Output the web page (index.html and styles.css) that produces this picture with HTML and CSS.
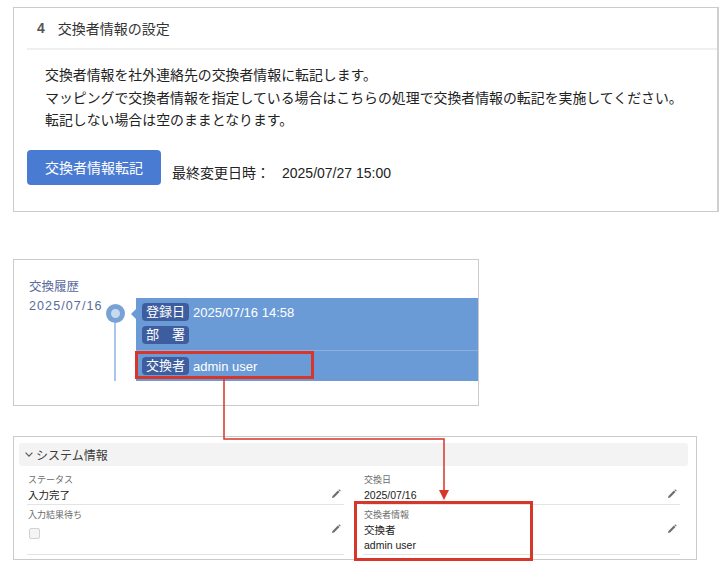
FILE: index.html
```html
<!DOCTYPE html>
<html lang="ja">
<head>
  <meta charset="UTF-8" />
  <meta name="viewport" content="width=device-width, initial-scale=1.0" />
  <title>交換者情報の設定</title>
  <link rel="stylesheet" href="styles.css">
</head>
<body>
  <div class="page">
    <section class="setting">
      <div class="setting-head"><span class="step">4</span>交換者情報の設定</div>
      <p class="setting-text">
        交換者情報を社外連絡先の交換者情報に転記します。<br>
        マッピングで交換者情報を指定している場合はこちらの処理で交換者情報の転記を実施してください。<br>
        転記しない場合は空のままとなります。
      </p>
      <div class="setting-actions">
        <button class="btn">交換者情報転記</button>
        <span class="meta">最終変更日時：<span class="meta-date">2025/07/27 15:00</span></span>
      </div>
    </section>

    <section class="history">
      <div class="history-date">
        <div>交換履歴</div>
        <div class="date-num">2025/07/16</div>
      </div>
      <div class="entry">
        <div class="axis">
          <div class="dot"></div>
          <div class="axis-line"></div>
        </div>
        <div class="card">
          <div class="card-section">
            <div class="row"><span class="badge">登録日</span>2025/07/16 14:58</div>
            <div class="row"><span class="badge">部　署</span></div>
          </div>
          <div class="card-section">
            <div class="row"><span class="badge">交換者</span>admin user</div>
            <div class="mark mark-user"></div>
          </div>
        </div>
      </div>
    </section>

    <section class="sysinfo">
      <div class="sys-head">
        <svg class="chevron" width="8" height="5" viewBox="0 0 8 5"><polyline points="0.6,0.6 4,4.2 7.4,0.6" fill="none" stroke="#555" stroke-width="1.1"/></svg>
        システム情報
      </div>
      <div class="fields">
        <div class="field">
          <div class="field-body">
            <div class="field-label">ステータス</div>
            <div class="field-value">入力完了</div>
          </div>
          <svg class="pencil" width="10" height="10" viewBox="0 0 10 10"><path d="M1 9 L1.5 6.9 L6.9 1.5 L8.5 3.1 L3.1 8.5 Z M7.4 1 L8.2 0.2 L9.8 1.8 L9 2.6 Z" fill="#6f6f6f"/></svg>
        </div>
        <div class="field">
          <div class="field-body">
            <div class="field-label">交換日</div>
            <div class="field-value">2025/07/16</div>
          </div>
          <svg class="pencil" width="10" height="10" viewBox="0 0 10 10"><path d="M1 9 L1.5 6.9 L6.9 1.5 L8.5 3.1 L3.1 8.5 Z M7.4 1 L8.2 0.2 L9.8 1.8 L9 2.6 Z" fill="#6f6f6f"/></svg>
        </div>
        <div class="field">
          <div class="field-body">
            <div class="field-label">入力結果待ち</div>
            <div class="checkbox"></div>
          </div>
          <svg class="pencil" width="10" height="10" viewBox="0 0 10 10"><path d="M1 9 L1.5 6.9 L6.9 1.5 L8.5 3.1 L3.1 8.5 Z M7.4 1 L8.2 0.2 L9.8 1.8 L9 2.6 Z" fill="#6f6f6f"/></svg>
        </div>
        <div class="field">
          <div class="field-body">
            <div class="field-label">交換者情報</div>
            <div class="field-value">交換者<br>admin user</div>
          </div>
          <svg class="pencil" width="10" height="10" viewBox="0 0 10 10"><path d="M1 9 L1.5 6.9 L6.9 1.5 L8.5 3.1 L3.1 8.5 Z M7.4 1 L8.2 0.2 L9.8 1.8 L9 2.6 Z" fill="#6f6f6f"/></svg>
          <div class="mark mark-field"></div>
        </div>
      </div>
    </section>

    <!-- annotation: arrow from history card to system info field -->
    <svg class="connector" width="725" height="568" viewBox="0 0 725 568">
      <path d="M224 377 V439 H444 V491" fill="none" stroke="#d7362a" stroke-width="1.5"/>
      <polygon points="439,490 449,490 444,500" fill="#d7362a"/>
    </svg>
  </div>
</body>
</html>
```

FILE: styles.css
```css
* {
  box-sizing: border-box;
}
body {
  margin: 0;
  background: #fff;
  font-family: "Liberation Sans", "Noto Sans CJK JP", sans-serif;
  color: #222;
}
.page {
  position: relative;
  width: 725px;
  padding: 7px 6px 8px 13px;
}

/* step 4 panel */
.setting {
  height: 205px;
  border: 1px solid #cbcbcb;
  border-right: 2px solid #d0d0d0;
}
.setting-head {
  display: flex;
  align-items: center;
  height: 42px;
  margin-left: 13px;
  padding-left: 10px;
  border-bottom: 2px solid #efefef;
  font-size: 14px;
  color: #333;
}
.step {
  font-weight: bold;
  color: #555;
  margin-right: 13px;
}
.setting-text {
  margin: 14px 0 0 31px;
  font-size: 13.9px;
  line-height: 22.5px;
}
.setting-actions {
  display: flex;
  align-items: center;
  margin: 18px 0 0 13px;
}
.btn {
  width: 134px;
  height: 35px;
  border: 0;
  border-radius: 4px;
  background: #4a7bd3;
  color: #fff;
  font-family: inherit;
  font-size: 14px;
}
.meta {
  margin-left: 11px;
  padding-top: 9px;
  font-size: 14px;
}
.meta-date {
  margin-left: 12px;
}

/* history */
.history {
  display: flex;
  align-items: flex-start;
  width: 466px;
  height: 147px;
  margin-top: 47px;
  padding: 18px 0 0 15px;
  border: 1px solid #cbcbcb;
}
.history-date {
  width: 76px;
  font-size: 12.5px;
  line-height: 19px;
  color: #596b9b;
}
.date-num {
  letter-spacing: 1.1px;
}
.entry {
  display: flex;
  flex: 1;
  margin-top: 20px;
}
.axis {
  display: flex;
  flex-direction: column;
  align-items: center;
  width: 20px;
  padding-top: 6px;
}
.dot {
  width: 19px;
  height: 19px;
  border-radius: 50%;
  border: 5px solid #78a2d6;
  background: #c8daef;
}
.axis-line {
  flex: 1;
  width: 2px;
  background: #a9c6e9;
}
.card {
  position: relative;
  flex: 1;
  margin-left: 11px;
  background: #6b9bd6;
  color: #fff;
  font-size: 13px;
}
.card::before {
  content: "";
  position: absolute;
  left: -5px;
  top: 11px;
  border-top: 5px solid transparent;
  border-bottom: 5px solid transparent;
  border-right: 5px solid #6b9bd6;
}
.card-section {
  position: relative;
  display: flex;
  flex-direction: column;
  gap: 5px;
  padding: 5px 6px 6px;
}
.card-section + .card-section {
  border-top: 1px solid #8cb1e1;
  padding-top: 6px;
}
.row {
  display: flex;
  align-items: center;
  gap: 4px;
  height: 18px;
}
.badge {
  padding: 0 4px;
  border-radius: 4px;
  background: #3e5d9f;
  line-height: 18px;
}

/* system info */
.sysinfo {
  width: 684px;
  height: 124px;
  margin-top: 30px;
  padding: 6px 8px 0 5px;
  border: 1px solid #cbcbcb;
}
.sys-head {
  display: flex;
  align-items: center;
  height: 23px;
  margin-bottom: 4px;
  padding-left: 6px;
  border-radius: 3px;
  background: #f3f3f3;
  font-size: 12px;
  color: #3a3a3a;
}
.chevron {
  margin-right: 3px;
}
.fields {
  display: grid;
  grid-template-columns: 317px 317px;
  column-gap: 19px;
  padding-left: 8px;
}
.field {
  position: relative;
  display: flex;
  padding: 4px 0 1px 1px;
  border-bottom: 1px solid #e4e4e4;
}
.field-body {
  flex: 1;
}
.field-label {
  font-size: 9px;
  line-height: 13px;
  color: #6b6b6b;
}
.field-value {
  margin-top: 1px;
  font-size: 10.5px;
  line-height: 15px;
  color: #222;
}
.checkbox {
  width: 11px;
  height: 11px;
  margin: 6px 0 0 1px;
  border: 1px solid #d2d2d2;
  border-radius: 2px;
  background: #f4f4f4;
}
.pencil {
  flex: none;
  margin: 15px 3px 0 0;
}

/* annotations */
.mark {
  position: absolute;
  border: 3px solid #d7362a;
}
.mark-user {
  left: -1px;
  top: 0;
  width: 179px;
  height: 28px;
}
.mark-field {
  left: -9px;
  top: -4px;
  width: 179px;
  height: 60px;
}
.connector {
  position: absolute;
  left: 0;
  top: 0;
  pointer-events: none;
}
```
